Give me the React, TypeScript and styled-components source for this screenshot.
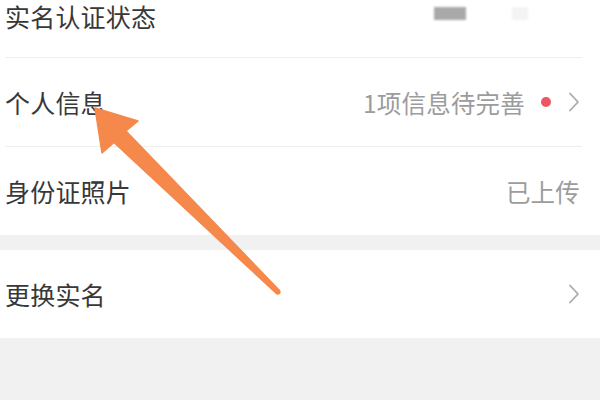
import React from "react";
import styled, { createGlobalStyle } from "styled-components";

const Global = createGlobalStyle`
  html, body { margin: 0; padding: 0; background: #f1f1f1; }
  body { width: 600px; height: 400px; overflow: hidden; font-family: "Noto Sans CJK SC", "Noto Sans", sans-serif; }
  #root { position: relative; width: 600px; height: 400px; overflow: hidden; }
`;

const Scroller = styled.div`
  display: flex;
  flex-direction: column;
  gap: 15px;
  margin-top: -31px;
`;

const Section = styled.div`
  background: #ffffff;
  display: flex;
  flex-direction: column;
`;

const Row = styled.div`
  height: 88px;
  display: flex;
  align-items: center;
  justify-content: space-between;
  padding: 0 20px 0 5px;
`;

const TopRow = styled(Row)`
  align-items: flex-start;
  padding-top: 34px;
  box-sizing: border-box;
`;

const Divider = styled.div`
  height: 1px;
  margin: 0 18px 0 5px;
  background: #efefef;
`;

const Label = styled.span`
  font-size: 25px;
  line-height: 27px;
  color: #383838;
  letter-spacing: 0.2px;
`;

const Right = styled.div`
  display: flex;
  align-items: center;
`;

const Value = styled.span`
  font-size: 24.5px;
  color: #9c9c9c;
  letter-spacing: 0.2px;
`;

const Dot = styled.span`
  width: 10px;
  height: 10px;
  border-radius: 50%;
  background: #ea5662;
  margin: 0 17px 0 16px;
`;

const Chevron = styled.svg`
  width: 12px;
  height: 20px;
  display: block;
`;

const Blurred = styled.div`
  display: flex;
  align-items: center;
  gap: 46px;
  margin-right: 52px;
  margin-top: 4px;
`;

const Smudge = styled.span<{ $w: number; $c: string }>`
  width: ${(p) => p.$w}px;
  height: 13px;
  background: ${(p) => p.$c};
  filter: blur(1px);
`;

const ArrowLayer = styled.svg`
  position: absolute;
  left: 0;
  top: 0;
  width: 600px;
  height: 400px;
  pointer-events: none;
`;

const Arrow = () => (
  <Chevron viewBox="0 0 12 20">
    <path d="M2 1.5 L10 10 L2 18.5" fill="none" stroke="#aaaaaa" strokeWidth="1.8" strokeLinecap="round" strokeLinejoin="round" />
  </Chevron>
);

export default function App() {
  return (
    <>
      <Global />
      <Scroller>
        <Section>
          <TopRow>
            <Label>实名认证状态</Label>
            <Blurred>
              <Smudge $w={32} $c="#a9a9a9" />
              <Smudge $w={16} $c="#f4f4f4" />
            </Blurred>
          </TopRow>
          <Divider />
          <Row>
            <Label>个人信息</Label>
            <Right>
              <Value>1项信息待完善</Value>
              <Dot />
              <Arrow />
            </Right>
          </Row>
          <Divider />
          <Row>
            <Label>身份证照片</Label>
            <Right>
              <Value>已上传</Value>
            </Right>
          </Row>
        </Section>
        <Section>
          <Row>
            <Label>更换实名</Label>
            <Right>
              <Arrow />
            </Right>
          </Row>
        </Section>
      </Scroller>
      <ArrowLayer viewBox="0 0 600 400">
        <path
          d="M95 108 L138 121 L126 131 L279.5 290.5 Q281 294 277 294 L114 142.5 L102 153 Z"
          fill="#f5884b"
          stroke="#f5884b"
          strokeWidth="1.5"
          strokeLinejoin="round"
        />
      </ArrowLayer>
    </>
  );
}
